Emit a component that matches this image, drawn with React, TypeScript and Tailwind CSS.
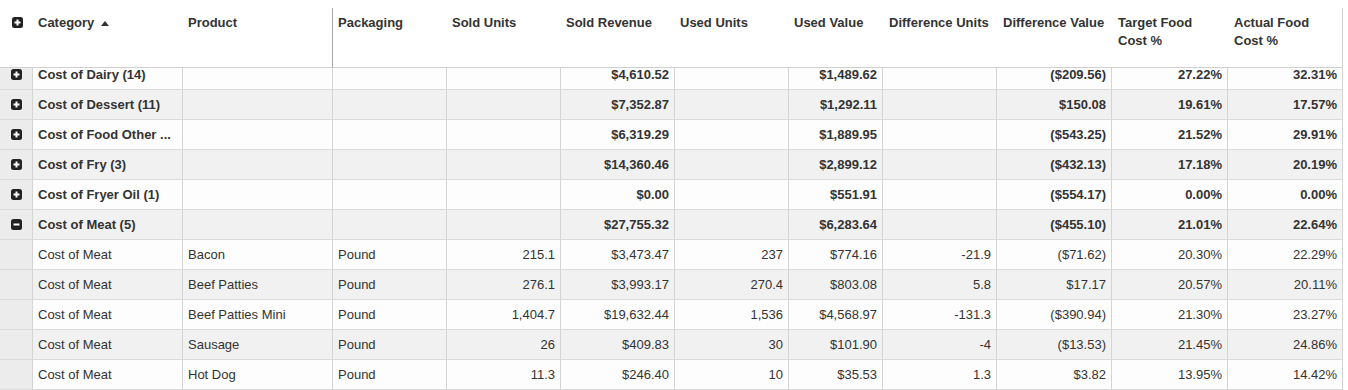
import React from "react";

type Row = {
  group?: boolean;
  open?: boolean;
  cells: string[];
};

const widths = ["w-[150px]", "w-[150px]", "w-[114px]", "w-[114px]", "w-[114px]", "w-[114px]", "w-[94px]", "w-[114px]", "w-[115px]", "w-[116px]", "w-[115px]"];
const rightAligned = [false, false, false, true, true, true, true, true, true, true, true];

const headers = [
  "Category",
  "Product",
  "Packaging",
  "Sold Units",
  "Sold Revenue",
  "Used Units",
  "Used Value",
  "Difference Units",
  "Difference Value",
  "Target Food Cost %",
  "Actual Food Cost %",
];

const rows: Row[] = [
  { group: true, cells: ["Cost of Dairy (14)", "", "", "", "$4,610.52", "", "$1,489.62", "", "($209.56)", "27.22%", "32.31%"] },
  { group: true, cells: ["Cost of Dessert (11)", "", "", "", "$7,352.87", "", "$1,292.11", "", "$150.08", "19.61%", "17.57%"] },
  { group: true, cells: ["Cost of Food Other ...", "", "", "", "$6,319.29", "", "$1,889.95", "", "($543.25)", "21.52%", "29.91%"] },
  { group: true, cells: ["Cost of Fry (3)", "", "", "", "$14,360.46", "", "$2,899.12", "", "($432.13)", "17.18%", "20.19%"] },
  { group: true, cells: ["Cost of Fryer Oil (1)", "", "", "", "$0.00", "", "$551.91", "", "($554.17)", "0.00%", "0.00%"] },
  { group: true, open: true, cells: ["Cost of Meat (5)", "", "", "", "$27,755.32", "", "$6,283.64", "", "($455.10)", "21.01%", "22.64%"] },
  { cells: ["Cost of Meat", "Bacon", "Pound", "215.1", "$3,473.47", "237", "$774.16", "-21.9", "($71.62)", "20.30%", "22.29%"] },
  { cells: ["Cost of Meat", "Beef Patties", "Pound", "276.1", "$3,993.17", "270.4", "$803.08", "5.8", "$17.17", "20.57%", "20.11%"] },
  { cells: ["Cost of Meat", "Beef Patties Mini", "Pound", "1,404.7", "$19,632.44", "1,536", "$4,568.97", "-131.3", "($390.94)", "21.30%", "23.27%"] },
  { cells: ["Cost of Meat", "Sausage", "Pound", "26", "$409.83", "30", "$101.90", "-4", "($13.53)", "21.45%", "24.86%"] },
  { cells: ["Cost of Meat", "Hot Dog", "Pound", "11.3", "$246.40", "10", "$35.53", "1.3", "$3.82", "13.95%", "14.42%"] },
];

function ToggleIcon({ open }: { open?: boolean }) {
  return (
    <svg width="11" height="11" viewBox="0 0 11 11">
      <rect x="0" y="0" width="11" height="11" rx="2.5" fill="#222" />
      <rect x="2.5" y="4.5" width="6" height="2" fill="#fff" />
      {!open && <rect x="4.5" y="2.5" width="2" height="6" fill="#fff" />}
    </svg>
  );
}

export default function App() {
  return (
    <div className="w-[1348px] h-[390px] overflow-hidden bg-white text-[13px] text-[#333]" style={{ fontFamily: '"Liberation Sans", Arial, sans-serif' }}>
      <div className="pt-2 w-[1343px]">
        <div className="flex h-[60px] border-b border-r border-[#d0d0d0] font-bold leading-[18px]">
          <div className="w-[33px] shrink-0 flex justify-center pt-[9px] pl-[1px]">
            <ToggleIcon />
          </div>
          {headers.map((h, i) => (
            <div
              key={h}
              className={`${widths[i]} shrink-0 ${i >= 7 ? "pl-[6px]" : "pl-[5px]"} pr-1 pt-[6px] ${i === 1 ? "border-r border-[#a8a8a8]" : ""}`}
            >
              {i === 0 ? (
                <span className="flex items-center gap-[7px]">
                  {h}
                  <svg width="8" height="5" viewBox="0 0 8 5" className="mt-[1px]">
                    <path d="M0 5 L4 0 L8 5 Z" fill="#333" />
                  </svg>
                </span>
              ) : i >= 9 ? (
                <span className="block w-[80px]">{h}</span>
              ) : (
                h
              )}
            </div>
          ))}
        </div>
      </div>
      <div className="h-[322px] overflow-hidden w-[1343px]">
        <div className="-mt-2">
          {rows.map((r, ri) => (
            <div
              key={ri}
              className={`flex h-[30px] border-b border-[#dadada] ${ri % 2 === 1 ? "bg-[#f1f1f1]" : "bg-[#fdfdfd]"} ${r.group ? "font-bold" : ""}`}
            >
              <div className="w-[33px] shrink-0 bg-[#ececec] border-r border-[#d4d4d4] flex items-center justify-center">
                {r.group && <ToggleIcon open={r.open} />}
              </div>
              {r.cells.map((c, ci) => (
                <div
                  key={ci}
                  className={`${widths[ci]} shrink-0 flex items-center border-r border-[#d4d4d4] pl-[5px] pr-[5px] whitespace-nowrap overflow-hidden ${rightAligned[ci] ? "justify-end" : ""}`}
                >
                  {c}
                </div>
              ))}
            </div>
          ))}
        </div>
      </div>
    </div>
  );
}
